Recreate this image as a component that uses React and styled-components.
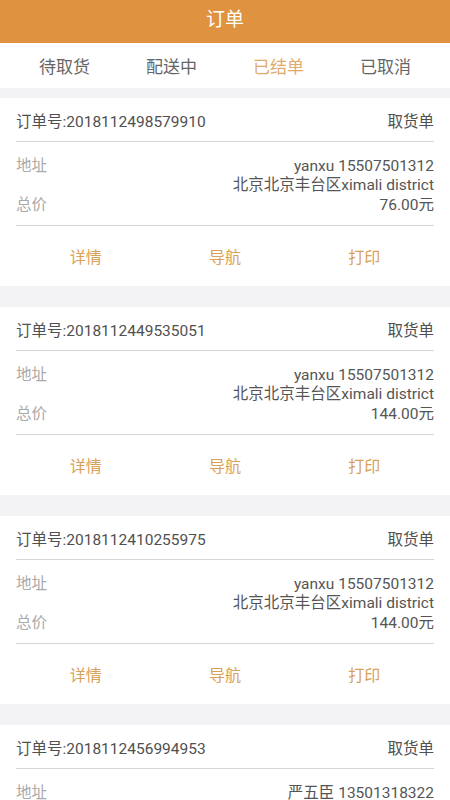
import styled, { createGlobalStyle } from "styled-components"

const GlobalStyle = createGlobalStyle`
body{
    margin: 0;
    background-color: #f3f3f5;
    font-family: Roboto, "Noto Sans CJK SC", sans-serif;
}
`;

const Page = styled.div`
width: 450px;
height: 800px;
overflow: hidden;
background-color: #f3f3f5;
display: flex;
flex-direction: column;
`;

const Header = styled.header`
height: 43px;
flex-shrink: 0;
background-color: #df923f;
color: #fff;
font-size: 19px;
line-height: 40px;
text-align: center;
`;

const Tabs = styled.nav`
height: 45px;
flex-shrink: 0;
background-color: #fff;
display: grid;
grid-template-columns: repeat(4, 1fr);
padding: 0 11px;
`;

const Tab = styled.div`
display: flex;
align-items: center;
justify-content: center;
font-size: 17px;
color: ${p => p.$active ? '#e0ab6a' : '#666'};
`;

const List = styled.div`
display: flex;
flex-direction: column;
gap: 21px;
padding-top: 10px;
`;

const Card = styled.div`
background-color: #fff;
padding: 0 16px;
flex-shrink: 0;
`;

const OrderRow = styled.div`
height: 43px;
display: flex;
align-items: center;
justify-content: space-between;
border-bottom: 1px solid #d6d6d6;
font-size: 15.5px;
color: #505050;
`;

const Info = styled.div`
padding: 15px 0 10px;
border-bottom: 1px solid #d6d6d6;
display: grid;
grid-template-columns: auto 1fr;
row-gap: 1px;
font-size: 15.5px;
line-height: 19px;
`;

const Label = styled.div`
color: #aaa;
`;

const Value = styled.div`
color: #555;
text-align: right;
`;

const Actions = styled.div`
height: 60px;
display: grid;
grid-template-columns: repeat(3, 1fr);
`;

const ActionBtn = styled.button`
border: none;
background: none;
font-family: inherit;
font-size: 16px;
color: #d9a157;
display: flex;
align-items: center;
justify-content: center;
padding: 0;
`;

const orders = [
    { no: '2018112498579910', name: 'yanxu 15507501312', addr: '北京北京丰台区ximali district', price: '76.00元' },
    { no: '2018112449535051', name: 'yanxu 15507501312', addr: '北京北京丰台区ximali district', price: '144.00元' },
    { no: '2018112410255975', name: 'yanxu 15507501312', addr: '北京北京丰台区ximali district', price: '144.00元' },
    { no: '2018112456994953', name: '严五臣 13501318322', addr: '北京北京朝阳区ximali district', price: '88.00元' },
];

export default function App(){

    const tabs = ['待取货', '配送中', '已结单', '已取消'];

    return(
        <Page>
            <GlobalStyle />
            <Header>订单</Header>
            <Tabs>
                {tabs.map((t, i) => <Tab key={t} $active={i === 2}>{t}</Tab>)}
            </Tabs>
            <List>
                {orders.map(o => (
                    <Card key={o.no}>
                        <OrderRow>
                            <span>订单号:{o.no}</span>
                            <span>取货单</span>
                        </OrderRow>
                        <Info>
                            <Label>地址</Label>
                            <Value>{o.name}<br />{o.addr}</Value>
                            <Label>总价</Label>
                            <Value>{o.price}</Value>
                        </Info>
                        <Actions>
                            <ActionBtn>详情</ActionBtn>
                            <ActionBtn>导航</ActionBtn>
                            <ActionBtn>打印</ActionBtn>
                        </Actions>
                    </Card>
                ))}
            </List>
        </Page>
    )
}
